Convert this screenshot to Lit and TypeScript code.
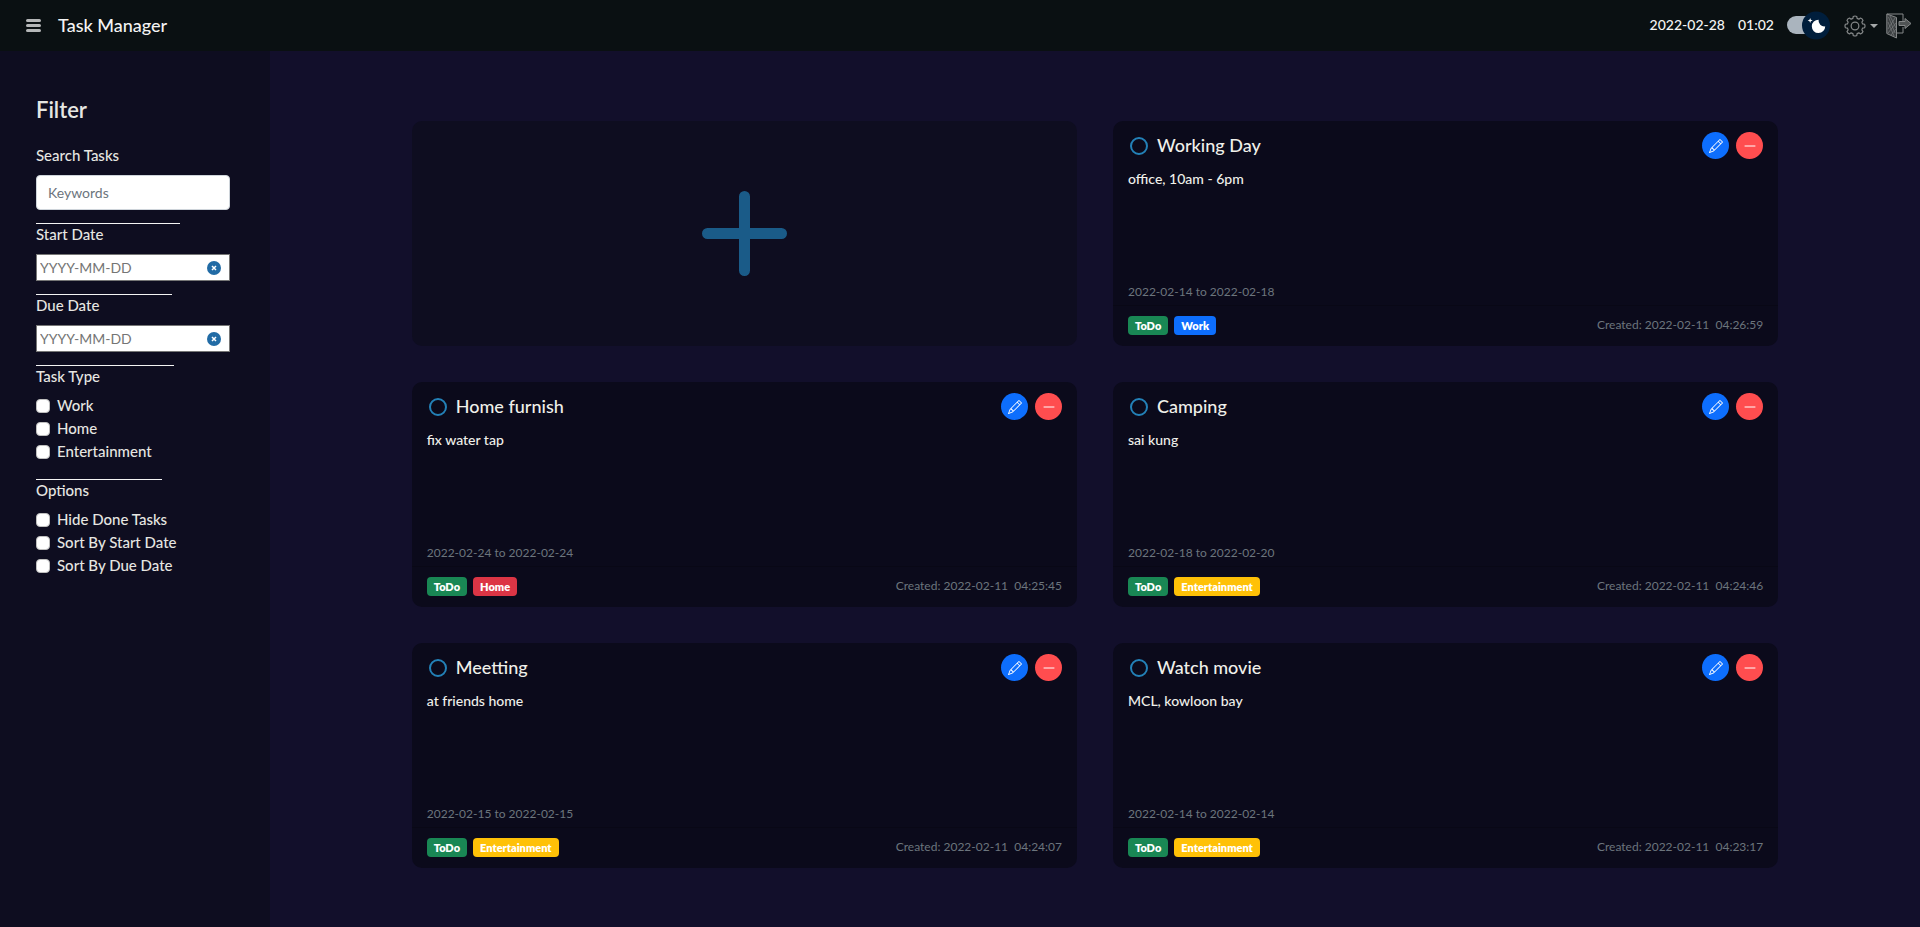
import { LitElement, html, css, svg } from "lit";
import { customElement, property } from "lit/decorators.js";
import { styleMap } from "lit/directives/style-map.js";

interface Task {
  title: string;
  note: string;
  start: string;
  due: string;
  type: "Work" | "Home" | "Entertainment";
  created: string;
}

const TASKS: Task[] = [
  { title: "Working Day", note: "office, 10am - 6pm", start: "2022-02-14", due: "2022-02-18", type: "Work", created: "2022-02-11\u00a0 04:26:59" },
  { title: "Home furnish", note: "fix water tap", start: "2022-02-24", due: "2022-02-24", type: "Home", created: "2022-02-11\u00a0 04:25:45" },
  { title: "Camping", note: "sai kung", start: "2022-02-18", due: "2022-02-20", type: "Entertainment", created: "2022-02-11\u00a0 04:24:46" },
  { title: "Meetting", note: "at friends home", start: "2022-02-15", due: "2022-02-15", type: "Entertainment", created: "2022-02-11\u00a0 04:24:07" },
  { title: "Watch movie", note: "MCL, kowloon bay", start: "2022-02-14", due: "2022-02-14", type: "Entertainment", created: "2022-02-11\u00a0 04:23:17" },
];

/* Gear outline with eight rounded teeth, centred on 12,12. */
const gearPath = (() => {
  const pts: string[] = [];
  for (let i = 0; i < 8; i++) {
    const a = (i * Math.PI) / 4 - Math.PI / 2;
    const at = (r: number, d: number) =>
      `${(12 + r * Math.cos(a + d)).toFixed(2)} ${(12 + r * Math.sin(a + d)).toFixed(2)}`;
    pts.push(`${i ? "L" : "M"}${at(8.6, -0.27)}L${at(10.6, -0.18)}Q${at(11.4, 0)} ${at(10.6, 0.18)}L${at(8.6, 0.27)}`);
  }
  return pts.join("") + "Z";
})();

@customElement("task-card")
export class TaskCard extends LitElement {
  @property({ attribute: false }) task!: Task;

  static styles = css`
    :host { display: block; min-width: 0; }
    * { box-sizing: border-box; }
    .card {
      display: flex; flex-direction: column; min-height: 225px;
      border-radius: 10px; background: #0b0a1b; overflow: hidden;
    }
    .body { flex: 1; display: flex; flex-direction: column; padding: 11px 15px 3px; }
    .head { display: flex; align-items: center; gap: 7px; }
    h2 { flex: 1; margin: 0; font-size: 18px; line-height: 27px; font-weight: 500; color: #f0f0ea; }
    .done {
      appearance: none; width: 18px; height: 18px; margin: 0 2px;
      border: 2px solid #2381b7; border-radius: 50%;
    }
    .done:checked { background: #2381b7; }
    button {
      display: grid; place-items: center; width: 27px; height: 27px; padding: 0;
      border: 0; border-radius: 50%; color: #fff; cursor: pointer;
    }
    .edit { background: #0d6efd; }
    .remove { background: #ff4d4f; }
    .note { flex: 1; margin: 9px 0 0; font-size: 14px; line-height: 21px; font-weight: 500; color: #f0f0ea; }
    .range, .created { margin: 0; font-size: 12px; line-height: 20px; color: #6c757d; }
    .foot {
      display: flex; align-items: center; gap: 6px; height: 41px; padding: 0 15px 2px;
      border-top: 1px solid #090816;
    }
    .badge {
      padding: 3px 7px; border-radius: 4px; color: #fff;
      font-size: 11px; line-height: 13px; font-weight: 800;
    }
    .todo { background: #198754; }
    .work { background: #0d6efd; }
    .home { background: #dc3545; }
    .entertainment { background: #ffc107; }
    .created { margin-left: auto; }
  `;

  render() {
    const t = this.task;
    return html`
      <article class="card">
        <div class="body">
          <div class="head">
            <input class="done" type="checkbox" aria-label="Done: ${t.title}" />
            <h2>${t.title}</h2>
            <button class="edit" aria-label="Edit">
              <svg width="14" height="14" viewBox="0 0 16 16" fill="currentColor">
                <path d="M12.146.146a.5.5 0 0 1 .708 0l3 3a.5.5 0 0 1 0 .708l-10 10a.5.5 0 0 1-.168.11l-5 2a.5.5 0 0 1-.65-.65l2-5a.5.5 0 0 1 .11-.168l10-10zM11.207 2.5 13.5 4.793 14.793 3.5 12.5 1.207 11.207 2.5zm1.586 3L10.5 3.207 4 9.707V10h.5a.5.5 0 0 1 .5.5v.5h.5a.5.5 0 0 1 .5.5v.5h.293l6.5-6.5zm-9.761 5.175-.106.106-1.528 3.821 3.821-1.528.106-.106A.5.5 0 0 1 5 12.5V12h-.5a.5.5 0 0 1-.5-.5V11h-.5a.5.5 0 0 1-.468-.325z"/>
              </svg>
            </button>
            <button class="remove" aria-label="Delete">
              <svg width="12" height="12" viewBox="0 0 12 12" stroke="currentColor" stroke-linecap="round">
                <path d="M1 6H11"/>
              </svg>
            </button>
          </div>
          <p class="note">${t.note}</p>
          <p class="range">${t.start} to ${t.due}</p>
        </div>
        <div class="foot">
          <span class="badge todo">ToDo</span>
          <span class="badge ${t.type.toLowerCase()}">${t.type}</span>
          <p class="created">Created: ${t.created}</p>
        </div>
      </article>
    `;
  }
}

@customElement("filter-panel")
export class FilterPanel extends LitElement {
  static styles = css`
    :host { display: block; }
    * { box-sizing: border-box; }
    .panel { height: 100%; padding: 44px 40px 36px 36px; background: #0e0d20; color: #e6e6e2; font-size: 15px; line-height: 21px; font-weight: 500; }
    h2 { margin: 0 0 20px; font-size: 22px; line-height: 30px; font-weight: 600; }
    fieldset { min-width: 0; margin: 0; padding: 0; border: 0; }
    .label { display: block; margin-bottom: 9px; }
    legend { padding: 0; margin-bottom: 7px; }
    .rule { height: 1px; margin: 13px 0 0; background: #f4f4f4; }
    input { font-family: inherit; }
    .text {
      display: block; width: 100%; height: 35px; padding: 0 11px;
      border: 1px solid #ced4da; border-radius: 4px; background: #fff; font-size: 14px;
    }
    .text::placeholder { color: #6c757d; opacity: 1; }
    .date { display: flex; align-items: center; height: 27px; padding: 0 8px 0 3px; border: 1px solid #767676; background: #fff; }
    .date input { flex: 1; min-width: 0; padding: 0; border: 0; outline: 0; font-size: 14px; line-height: 20px; background: none; }
    .date input::placeholder { color: #757575; opacity: 1; }
    .clear { display: block; padding: 0; border: 0; background: none; line-height: 0; cursor: pointer; }
    .check { display: flex; align-items: center; gap: 7px; height: 23px; }
    .check input {
      appearance: none; width: 14px; height: 14px; margin: 0;
      border: 1px solid #bfbfbf; border-radius: 4px; background: #fff;
    }
    .check input:checked { background: #0d6efd; }
    .checks { margin-bottom: 16px; }
  `;

  private rule(share: number) {
    return html`<div class="rule" style=${styleMap({ width: `${share}%` })}></div>`;
  }

  private date(id: string, label: string) {
    return html`
      <label class="label" for=${id}>${label}</label>
      <div class="date">
        <input id=${id} type="text" placeholder="YYYY-MM-DD" />
        <button class="clear" aria-label="Clear ${label}">
          <svg width="14" height="14" viewBox="0 0 14 14">
            <circle cx="7" cy="7" r="7" fill="#216ba5"/>
            <path d="M5 5L9 9M9 5L5 9" stroke="#fff" stroke-width="1.5"/>
          </svg>
        </button>
      </div>
    `;
  }

  private checks(legend: string, items: string[]) {
    return html`
      <fieldset class="checks">
        <legend>${legend}</legend>
        ${items.map((t) => html`<label class="check"><input type="checkbox" />${t}</label>`)}
      </fieldset>
    `;
  }

  render() {
    return html`
      <div class="panel">
        <h2>Filter</h2>
        <label class="label" for="keywords">Search Tasks</label>
        <input class="text" id="keywords" type="text" placeholder="Keywords" />
        ${this.rule(74)} ${this.date("start", "Start Date")}
        ${this.rule(70)} ${this.date("due", "Due Date")}
        ${this.rule(71)} ${this.checks("Task Type", ["Work", "Home", "Entertainment"])}
        ${this.rule(65)} ${this.checks("Options", ["Hide Done Tasks", "Sort By Start Date", "Sort By Due Date"])}
      </div>
    `;
  }
}

@customElement("app-root")
export class AppRoot extends LitElement {
  static styles = css`
    :host {
      display: flex; flex-direction: column; min-height: 100vh;
      font-family: Lato, "Liberation Sans", sans-serif; background: #120f2b;
    }
    * { box-sizing: border-box; }
    header {
      display: flex; align-items: center; height: 51px; padding: 0 8px 0 25px;
      background: #0a1012; color: #f4f4f4;
    }
    button { padding: 0; border: 0; background: none; line-height: 0; cursor: pointer; }
    h1 { flex: 1; margin: 0 0 0 16px; font-size: 18px; line-height: 27px; font-weight: 500; }
    time { margin-right: 13px; padding-bottom: 3px; font-size: 14px; line-height: 21px; font-weight: 500; }
    .switch { margin-right: 14px; }
    .settings { display: flex; align-items: center; gap: 4px; margin-right: 8px; }
    .layout { flex: 1; display: grid; grid-template-columns: 270px 1fr; }
    main { padding: 70px calc(7.5% + 18px) 59px; }
    .grid { display: grid; grid-template-columns: 1fr 1fr; gap: 36px; }
    .add {
      display: grid; place-items: center; min-height: 225px;
      border-radius: 10px; background: #0e0d20;
    }
  `;

  render() {
    return html`
      <header>
        <button aria-label="Menu">
          <svg width="17" height="16" viewBox="0 0 17 16" stroke="#b5b7b8" stroke-width="3" stroke-linecap="round">
            <path d="M2.5 2.5H14.5M2.5 7.5H14.5M2.5 12.5H14.5"/>
          </svg>
        </button>
        <h1>Task Manager</h1>
        <time>2022-02-28</time>
        <time>01:02</time>
        <button class="switch" role="switch" aria-checked="true" aria-label="Dark mode">
          <svg width="43" height="30" viewBox="0 0 43 30">
            <rect x="0" y="5" width="38" height="18" rx="9" fill="#aab4be"/>
            <circle cx="29" cy="14.500" r="14" fill="#001e3c"/>
            <path transform="translate(19 4.500)" fill="#fff" d="M4.2 2.5l-.7 1.8-1.8.7 1.8.7.7 1.8.6-1.8L6.700 5l-1.900-.7-.6-1.800zm15 8.300a6.700 6.700 0 1 1-6.600-6.600 5.800 5.800 0 0 0 6.600 6.600z"/>
          </svg>
        </button>
        <button class="settings" aria-label="Settings">
          <svg width="22" height="22" viewBox="0 0 24 24" fill="none" stroke="#858889" stroke-width="1.300" stroke-linejoin="round">
            ${svg`<path d=${gearPath}/>`}
            <circle cx="12" cy="12" r="4.200"/>
          </svg>
          <svg width="8" height="4" viewBox="0 0 8 4"><path d="M0 0H8L4 4Z" fill="#a5a8a9"/></svg>
        </button>
        <button aria-label="Log out">
          <svg width="26" height="26" viewBox="0 0 26 26" fill="none" stroke="#858889">
            <path d="M.8 1L10.500 4.500V25L.8 20.500Z" fill="#3c4042"/>
            <path d="M1 1H17V8M17 14V20H11"/>
            <path d="M2.500 4L9 20M2 9L8 23M4 3L10 15M2 16L9 5M2 20L10 10M5 22L10 16" stroke-width=".6"/>
            <path d="M13 8.500H19V5.500L25 10.500L19 15.500V12.500H13Z" fill="#505455"/>
          </svg>
        </button>
      </header>
      <div class="layout">
        <filter-panel></filter-panel>
        <main>
          <div class="grid">
            <button class="add" aria-label="Add task">
              <svg width="85" height="85" viewBox="0 0 85 85" stroke="#1a5b88" stroke-width="11" stroke-linecap="round">
                <path d="M42.500 5.500V79.500M5.500 42.500H79.500"/>
              </svg>
            </button>
            ${TASKS.map((t) => html`<task-card .task=${t}></task-card>`)}
          </div>
        </main>
      </div>
    `;
  }
}
